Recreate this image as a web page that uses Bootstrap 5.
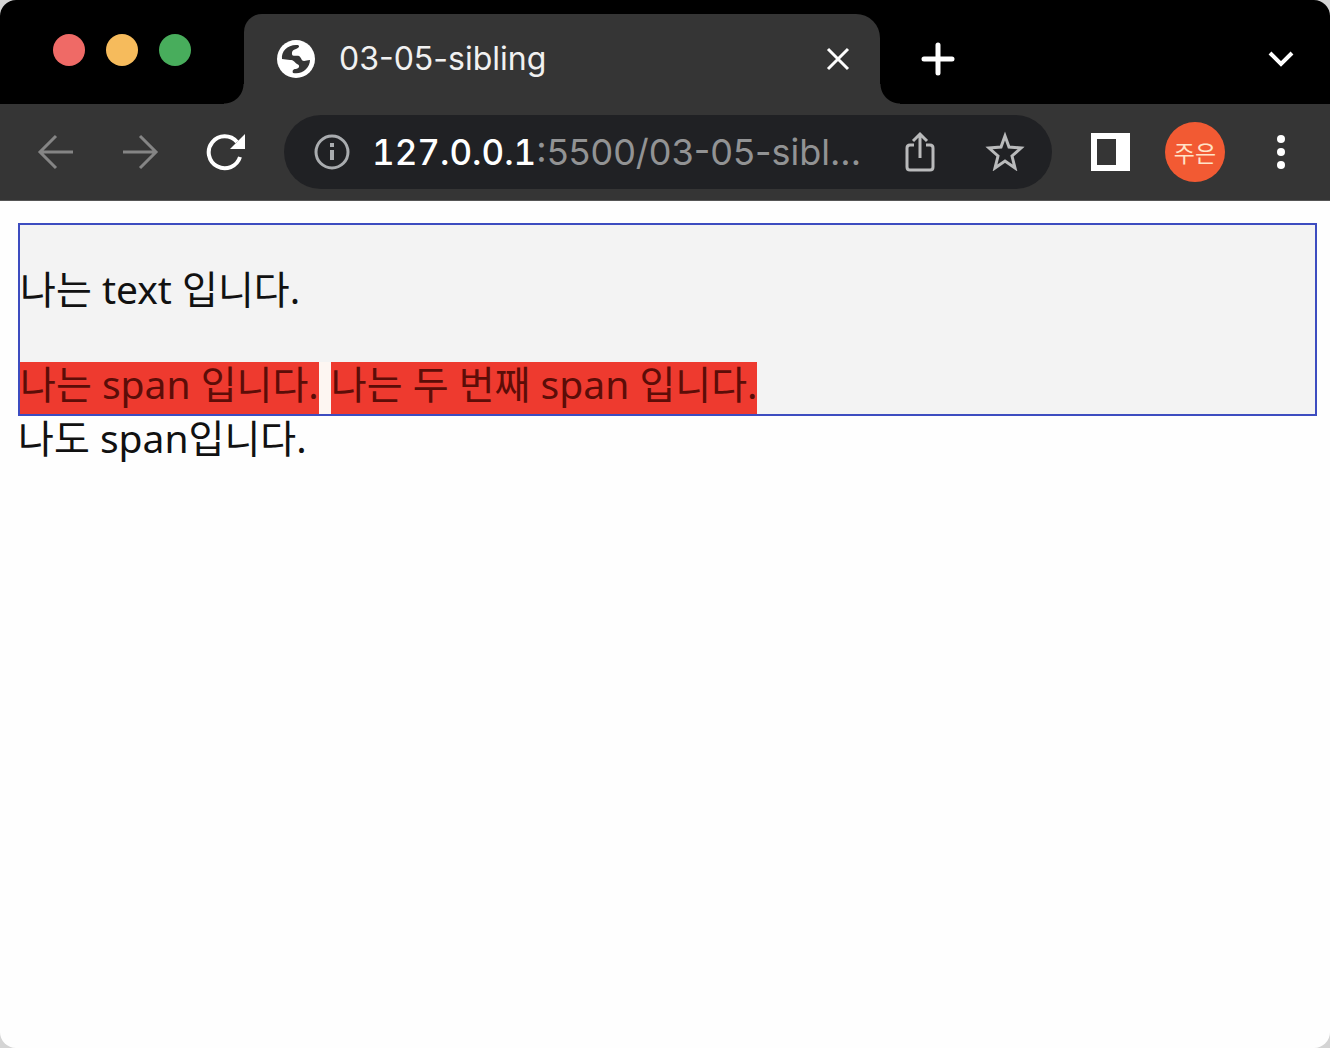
<!DOCTYPE html>
<html lang="ko">
<head>
<meta charset="utf-8">
<meta name="viewport" content="width=device-width, initial-scale=1">
<title>03-05-sibling</title>
<link href="https://cdn.jsdelivr.net/npm/bootstrap@5.3.0/dist/css/bootstrap.min.css" rel="stylesheet">
<style>
  body { background: #d4d4d4; font-family: Inter, "Noto Sans CJK KR", sans-serif; }
  .browser { border-radius: 16px; background: #fefefe; }
  .tab-strip { background: #000; height: 104px; padding: 14px 34px 0 53px; }
  .lights { gap: 21px; width: 191px; padding-top: 20px; }
  .light { width: 32px; height: 32px; }
  .light-close { background: #ef6a66; }
  .light-min { background: #f6bb5c; }
  .light-max { background: #48ad5c; }
  .page-tab { background: #353535; color: #f1f1f1; height: 90px; flex: 0 1 636px; border-radius: 18px 24px 0 0; padding: 0 28px 0 33px; }
  /* concave feet where the tab meets the toolbar */
  .page-tab::before, .page-tab::after { content: ""; position: absolute; bottom: 0; width: 20px; height: 20px; }
  .page-tab::before { right: 100%; background: radial-gradient(circle at 0 0, #000 19px, #353535 20px); }
  .page-tab::after { left: 100%; background: radial-gradient(circle at 100% 0, #000 19px, #353535 20px); }
  .tab-title { font-size: 32px; line-height: 40px; margin-left: 24px; }
  .tool { background: none; border: 0; padding: 0; color: #fff; display: flex; }
  .tool-dim { color: #858585; }
  .tool-soft { color: #b9babb; }
  .add-tab { margin-left: 41px; }
  .toolbar { background: #353535; height: 97px; padding: 0 44px 0 36px; border-bottom: 1px solid #555; }
  .nav-tools { gap: 46px; margin-right: 38px; }
  .omnibox { background: #202124; height: 74px; padding: 0 27px 0 29px; border-radius: 37px; min-width: 0; }
  .address { line-height: 44px; }
  .host { color: #fff; font-size: 35px; font-weight: 500; font-variant-numeric: tabular-nums; margin-left: 21px; }
  .path { color: #929394; font-size: 36px; background: none; border: 0; padding: 0; width: 0; min-width: 0; outline: 0; }
  .box-tools { gap: 46px; margin-left: 20px; }
  .side-tools { gap: 35px; margin-left: 39px; }
  .avatar { width: 60px; height: 60px; background: #f25a33; color: #ffe3c8; font: 23px/58px "Noto Sans CJK KR", sans-serif; border: 0; padding: 0; margin-right: 16px; }
  .page { padding: 22px 13px 0 18px; min-height: 847px; font: 39px/44px "Noto Sans", "Noto Sans CJK KR", sans-serif; color: #111; }
  .demo { background: #f3f3f3; border: 2px solid #3d4cc0; }
  .demo p { margin: 42px 0 51px; }
  .hit { background: #ee3a2f; color: #5c0d08; padding-bottom: 8px; }
  .hit + .hit { border-left: 12px solid #fdf6f2; }
</style>
<script src="https://cdn.jsdelivr.net/npm/bootstrap@5.3.0/dist/js/bootstrap.bundle.min.js"></script>
</head>
<body>
<div class="browser overflow-hidden">
  <header>
    <div class="tab-strip d-flex">
      <div class="lights d-flex flex-shrink-0">
        <span class="light light-close rounded-circle"></span>
        <span class="light light-min rounded-circle"></span>
        <span class="light light-max rounded-circle"></span>
      </div>
      <div class="page-tab position-relative d-flex align-items-center">
        <svg width="38" height="38" viewBox="0 0 38 38" aria-hidden="true"><circle cx="19" cy="19" r="19" fill="#fff"/><path d="M5 19C4 11 11 4 21 5c2 1 1 3-2 4-4 1-4 3-4 5 0 3 5 1 7 2 3 2 2 5 5 5 2 0 3-1 6-1 0 8-8 15-17 13-1-2 0-4 3-4 4-1 4-4 1-5-3-2-3-4-7-4z" fill="#353535"/></svg>
        <span class="tab-title flex-grow-1 text-truncate">03-05-sibling</span>
        <button class="tool" type="button" aria-label="Close tab"><svg width="28" height="28" viewBox="0 0 28 28" fill="none" stroke="currentColor" stroke-width="3"><path d="M4 4l20 20M24 4L4 24"/></svg></button>
      </div>
      <button class="tool add-tab align-items-center" type="button" aria-label="New tab"><svg width="34" height="34" viewBox="0 0 34 34" fill="none" stroke="currentColor" stroke-width="5" stroke-linecap="round"><path d="M17 3v28M3 17h28"/></svg></button>
      <button class="tool ms-auto align-items-center" type="button" aria-label="Search tabs"><svg width="30" height="30" viewBox="0 0 30 30" fill="none" stroke="currentColor" stroke-width="4"><path d="M4 9l11 11L26 9"/></svg></button>
    </div>
    <div class="toolbar d-flex align-items-center">
      <nav class="nav-tools d-flex flex-shrink-0" aria-label="History">
        <button class="tool tool-dim" type="button" aria-label="Back"><svg width="39" height="38" viewBox="0 0 39 38" fill="none" stroke="currentColor" stroke-width="3"><path d="M37 19H4M20 3L4 19l16 16"/></svg></button>
        <button class="tool tool-dim" type="button" aria-label="Forward"><svg width="39" height="38" viewBox="0 0 39 38" fill="none" stroke="currentColor" stroke-width="3"><path d="M2 19h33M19 3l16 16-16 16"/></svg></button>
        <button class="tool" type="button" aria-label="Reload"><svg width="40" height="38" viewBox="0 0 40 38"><path d="M34 24A16 16 0 1 1 31 9" fill="none" stroke="currentColor" stroke-width="4"/><path d="M39 1v15H24z" fill="currentColor"/></svg></button>
      </nav>
      <form class="omnibox d-flex align-items-center flex-grow-1">
        <svg class="flex-shrink-0" width="38" height="38" viewBox="0 0 38 38" fill="none" stroke="#a9acaf" stroke-width="3" aria-hidden="true"><circle cx="19" cy="19" r="16"/><path d="M19 17v10" stroke-width="4"/><path d="M19 10v4" stroke-width="4"/></svg>
        <label class="address host" for="url">127.0.0.1</label>
        <input class="address path flex-grow-1" id="url" type="text" value=":5500/03-05-sibl...">
        <div class="box-tools d-flex flex-shrink-0">
          <button class="tool tool-soft" type="button" aria-label="Share"><svg width="38" height="42" viewBox="0 0 38 42" fill="none" stroke="currentColor" stroke-width="3"><path d="M13 14H9q-3 0-3 3v19q0 3 3 3h20q3 0 3-3V17q0-3-3-3h-4M19 27V4M12 10l7-7 7 7"/></svg></button>
          <button class="tool tool-soft" type="button" aria-label="Bookmark"><svg width="40" height="40" viewBox="0 0 40 40" fill="none" stroke="currentColor" stroke-width="3"><path d="M20 5l4 11 12 1-9 8 3 12-10-7-10 7 3-12-9-8 12-1z"/></svg></button>
        </div>
      </form>
      <div class="side-tools d-flex align-items-center flex-shrink-0">
        <button class="tool" type="button" aria-label="Side panel"><svg width="39" height="38" viewBox="0 0 39 38"><path d="M0 0h39v38H0zM6 6v26h19V6z" fill="currentColor" fill-rule="evenodd"/></svg></button>
        <button class="avatar rounded-circle" type="button">주은</button>
        <button class="tool" type="button" aria-label="Menu"><svg width="10" height="38" viewBox="0 0 10 38" fill="currentColor"><circle cx="5" cy="6" r="4"/><circle cx="5" cy="19" r="4"/><circle cx="5" cy="32" r="4"/></svg></button>
      </div>
    </div>
  </header>
  <main class="page">
    <div class="demo">
      <p>나는 text 입니다.</p>
      <div class="d-flex flex-wrap"><span class="hit">나는 span 입니다.</span><span class="hit">나는 두 번째 span 입니다.</span></div>
    </div>
    <span>나도 span입니다.</span>
  </main>
</div>
</body>
</html>
